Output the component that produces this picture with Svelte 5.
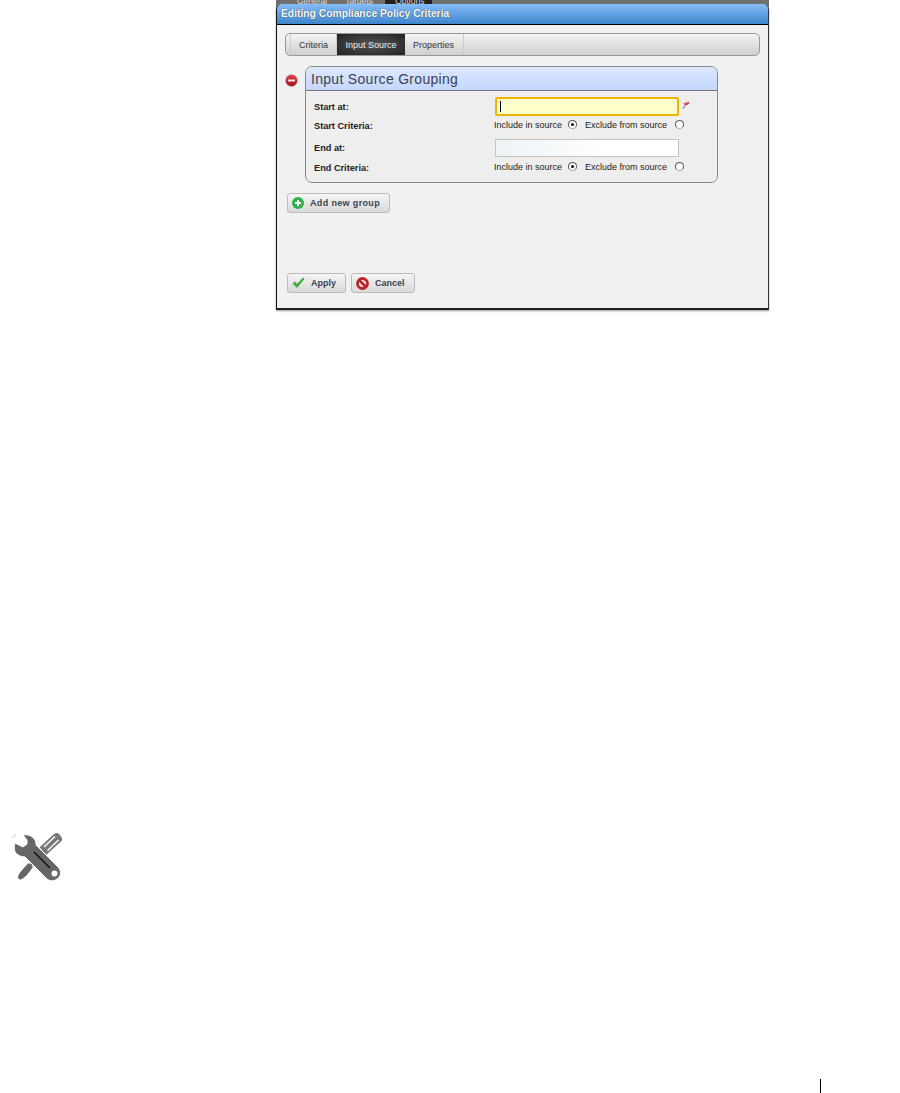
<script>
  const tabs = ['Criteria', 'Input Source', 'Properties'];
  let active = 'Input Source';

  const rows = [
    { label: 'Start at:', kind: 'required' },
    { label: 'Start Criteria:', kind: 'radio' },
    { label: 'End at:', kind: 'input' },
    { label: 'End Criteria:', kind: 'radio' }
  ];
</script>

<div class="page">
  <section class="window">
    <div class="behind">
      <span>General</span><span>Targets</span><span class="dark">Options</span>
    </div>
    <div class="frame">
      <h1>Editing Compliance Policy Criteria</h1>
      <div class="body">
        <nav class="tabs">
          {#each tabs as t}
            <button class="tab" class:active={t === active} onclick={() => (active = t)}>{t}</button>
          {/each}
        </nav>

        <div class="group-row">
          <svg class="minus" width="13" height="13" viewBox="0 0 13 13">
            <defs>
              <linearGradient id="red" x1="0" y1="0" x2="0" y2="1">
                <stop offset="0" stop-color="#e2474a" />
                <stop offset="1" stop-color="#a50f16" />
              </linearGradient>
            </defs>
            <circle cx="6.500" cy="6.500" r="6" fill="url(#red)" stroke="#bbb" stroke-width="0.500" />
            <rect x="3" y="5.500" width="7" height="2" fill="#f4e4e4" />
          </svg>
          <div class="panel">
            <h2>Input Source Grouping</h2>
            <div class="fields">
              {#each rows as r}
                <div class="row" class:tall={r.kind !== 'radio'}>
                  <b>{r.label}</b>
                  {#if r.kind === 'required'}
                    <div class="input focus"><i class="caret"></i></div>
                    <svg class="pin" width="8" height="8" viewBox="0 0 8 8">
                      <path d="M3 4.500 1 7.800" stroke="#9a8c7c" stroke-width="1.200" />
                      <path d="M1.500 2.500 7.500 0.500 7 2.500 5.500 4 3 4.500Z" fill="#e0454c" />
                    </svg>
                  {:else if r.kind === 'input'}
                    <div class="input"></div>
                  {:else}
                    <div class="radios">
                      <span class="opt1">Include in source</span>
                      <i class="radio on"></i>
                      <span class="opt2">Exclude from source</span>
                      <i class="radio"></i>
                    </div>
                  {/if}
                </div>
              {/each}
            </div>
          </div>
        </div>

        <button class="btn add">
          <svg width="12" height="12" viewBox="0 0 12 12">
            <circle cx="6" cy="6" r="6" fill="#2fb24a" />
            <path d="M6 3v6M3 6h6" stroke="#fff" stroke-width="2" />
          </svg>
          Add new group
        </button>

        <div class="actions">
          <button class="btn apply">
            <svg width="13" height="12" viewBox="0 0 13 12">
              <path d="M0.500 6.500 3 4.500 5 7 11 0.500 12.500 2 5 11Z" fill="#3fae3c" />
            </svg>
            Apply
          </button>
          <button class="btn cancel">
            <svg width="13" height="13" viewBox="0 0 13 13">
              <circle cx="6.500" cy="6.500" r="5" fill="#eee" stroke="#b9252b" stroke-width="2.800" />
              <path d="M3 3 10 10" stroke="#b9252b" stroke-width="2.600" />
            </svg>
            Cancel
          </button>
        </div>
      </div>
    </div>
  </section>

  <svg class="tools" width="60" height="55" viewBox="0 0 60 55">
    <path d="M4 8 8 4" stroke="#e6e6e6" stroke-width="2" />
    <!-- screwdriver -->
    <path d="M31.600 17.300 46 4C48 2.500 50 3 51.500 4.500L53 6.500C54.500 8.500 54.500 10 53 11.500L38.400 24.700Z" fill="#777" />
    <path d="M36 17 47 6.500M39.500 20.500 50.500 10" stroke="#fff" stroke-width="1.400" />
    <path d="M35 21 23 35" stroke="#666" stroke-width="2.500" />
    <path d="M21 33 25 37C22 41 18 47 14 49 12 50 10 49 10 47 11 43 17 36 21 33Z" fill="#666" />
    <!-- wrench -->
    <path d="M15 5C19 4 25 6 27 10 28 12 28 14 28 15L50 37C54 41 53 47 49 49 45 52 41 51 38 48L17 27C13 27 9 25 7 22 6 19 6 16 7 13L15 17 19 14 19 10Z" fill="#676767" stroke="#fff" stroke-width="1" />
    <circle cx="46.500" cy="43.500" r="3" fill="#fff" />
    <path d="M26 22 41.700 37.700" stroke="#111" stroke-width="1.500" />
  </svg>

  <footer><i></i></footer>
</div>

<style>
  :global(body) {
    background: #fff;
    font-family: "Liberation Sans", Arial, sans-serif;
  }
  .page {
    height: 1093px;
    display: flex;
    flex-direction: column;
    overflow: hidden;
  }
  .window {
    margin-left: 276px;
    width: 493px;
    height: 310px;
    background: linear-gradient(#6f6f6f 0 10px, transparent 10px);
    flex: none;
  }
  .behind {
    height: 4px;
    overflow: hidden;
    display: flex;
    gap: 18px;
    padding-left: 21px;
    font-size: 8.500px;
    line-height: 2px;
    color: #ddd;
  }
  .behind .dark {
    background: #222;
    padding: 0 8px 0 10px;
    margin-left: -6px;
  }
  .frame {
    height: 304px;
    border-left: 1px solid #111;
    border-right: 1px solid #333;
    border-bottom: 2px solid #222;
    background: #f1f1f1;
    border-radius: 6px 6px 0 0;
    overflow: hidden;
    box-shadow: 0 1px 2px #999;
  }
  h1 {
    margin: 0;
    height: 20px;
    border-bottom: 1px solid #000;
    background: linear-gradient(#86bdf8, #3d85cc);
    color: #fff;
    font-size: 10.300px;
    font-weight: bold;
    line-height: 20px;
    padding-left: 4px;
    text-shadow: 0 0 1px #123;
  }
  .body {
    padding: 8px 8px 0;
  }
  nav.tabs {
    height: 21px;
    display: flex;
    padding-left: 4px;
    border: 1px solid #999;
    border-radius: 5px;
    background: linear-gradient(#f3f3f3, #cfcfcf);
  }
  .tab {
    border: 0;
    border-right: 1px solid #ccc;
    background: none;
    font: 9px "Liberation Sans", sans-serif;
    color: #333;
    padding: 0 8px;
  }
  .tab:first-child {
    border-left: 1px solid #ccc;
  }
  .tab:last-child {
    padding: 0 9px 0 8px;
  }
  .tab.active {
    background: radial-gradient(ellipse at center, #555, #222);
    color: #eee;
    border: 0;
    padding: 0 8.500px;
  }
  .group-row {
    margin-top: 10px;
    display: flex;
    align-items: flex-start;
    gap: 7px;
  }
  .minus {
    flex: none;
    margin-top: 8px;
  }
  .panel {
    width: 413px;
    height: 117px;
    box-sizing: border-box;
    border: 1px solid #888;
    border-radius: 7px;
    background: #eee;
    overflow: hidden;
  }
  h2 {
    margin: 0;
    height: 23px;
    border-bottom: 1px solid #777;
    background: linear-gradient(#dde8fe, #c4d7fd);
    font-size: 14px;
    font-weight: normal;
    line-height: 24px;
    letter-spacing: 0.300px;
    color: #3b4250;
    padding-left: 5px;
  }
  .fields {
    padding: 6px 0 0 8px;
  }
  .row {
    display: flex;
    align-items: center;
    height: 19px;
    margin-bottom: 2px;
  }
  .row:nth-child(2) {
    height: 15px;
    margin-bottom: 5px;
  }
  .row:nth-child(3) {
    margin-bottom: 3px;
  }
  .row:nth-child(4) {
    height: 15px;
  }
  .row b {
    width: 181px;
    flex: none;
    font-size: 9.200px;
    color: #222;
  }
  .input {
    width: 184px;
    height: 18px;
    box-sizing: border-box;
    border: 1px solid #c4c4c4;
    background: linear-gradient(90deg, #edf3f6, #fff 60%);
  }
  .input.focus {
    height: 19px;
    border: 2px solid #f0b400;
    background: #ffffcc;
    border-radius: 2px;
    padding: 2px 3px;
  }
  .caret {
    display: block;
    width: 1px;
    height: 11px;
    background: #000;
  }
  .pin {
    margin: -4px 0 0 3px;
  }
  .radios {
    display: flex;
    align-items: center;
    margin: -2px 0 0 -1px;
    font-size: 9px;
    color: #222;
  }
  .opt1 {
    width: 74px;
  }
  .opt2 {
    width: 90px;
    margin-left: 8px;
  }
  .radio {
    width: 9px;
    height: 9px;
    box-sizing: border-box;
    border: 1px solid #555;
    border-bottom-color: #aaa;
    border-radius: 50%;
    background: #fff;
    position: relative;
  }
  .radio.on::after {
    content: "";
    position: absolute;
    left: 2px;
    top: 2px;
    width: 3px;
    height: 3px;
    border-radius: 50%;
    background: #111;
  }
  .btn {
    display: flex;
    align-items: center;
    height: 20px;
    gap: 6px;
    padding: 0 4px;
    border: 1px solid #bbb;
    border-radius: 3px;
    background: linear-gradient(#f5f5f5, #d9d9d9);
    font: bold 9px "Liberation Sans", sans-serif;
    color: #3a4452;
  }
  .add {
    margin: 10px 0 0 2px;
    width: 103px;
    letter-spacing: 0.350px;
  }
  .actions {
    margin: 60px 0 0 2px;
    display: flex;
    gap: 5px;
  }
  .apply {
    width: 59px;
  }
  .cancel {
    width: 64px;
  }
  .tools {
    margin: 520px 0 0 8px;
    flex: none;
  }
  footer {
    margin-top: auto;
    height: 14px;
    padding-left: 820px;
  }
  footer i {
    display: block;
    width: 1px;
    height: 14px;
    background: #000;
  }
</style>
